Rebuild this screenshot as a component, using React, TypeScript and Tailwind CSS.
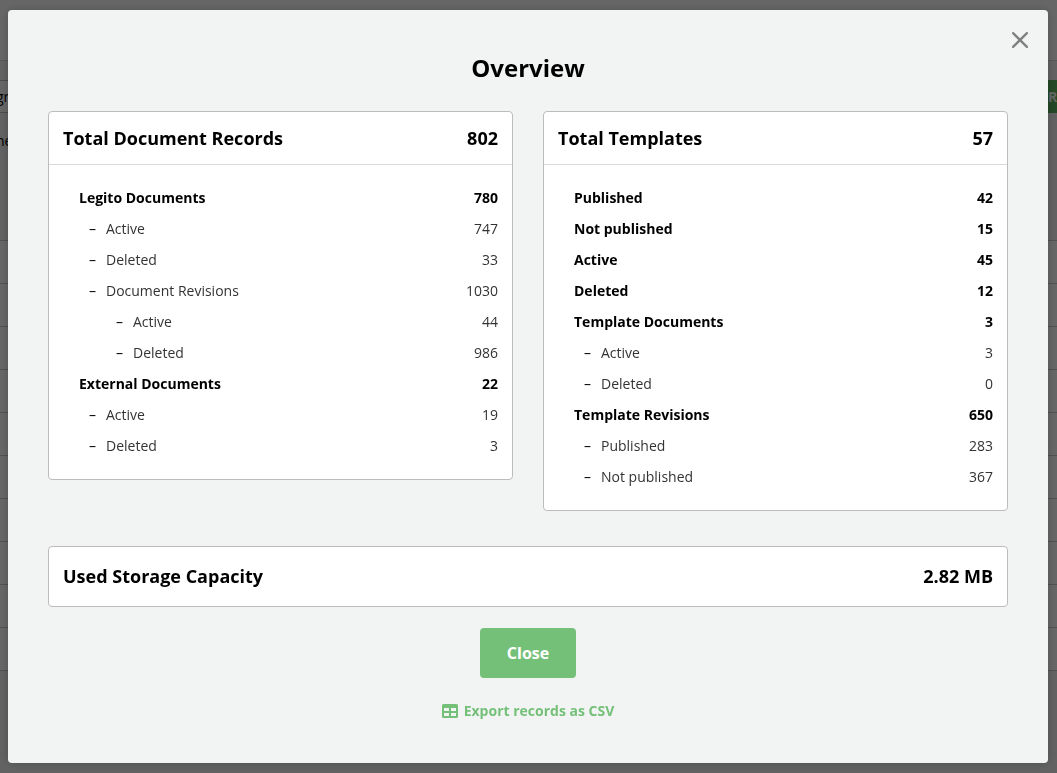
import { X } from "lucide-react";

interface StatRow {
  label: string;
  value: string;
  level: 0 | 1 | 2;
}

interface StatCardProps {
  title: string;
  total: string;
  rows?: StatRow[];
}

const documentRows: StatRow[] = [
  { label: "Legito Documents", value: "780", level: 0 },
  { label: "Active", value: "747", level: 1 },
  { label: "Deleted", value: "33", level: 1 },
  { label: "Document Revisions", value: "1030", level: 1 },
  { label: "Active", value: "44", level: 2 },
  { label: "Deleted", value: "986", level: 2 },
  { label: "External Documents", value: "22", level: 0 },
  { label: "Active", value: "19", level: 1 },
  { label: "Deleted", value: "3", level: 1 },
];

const templateRows: StatRow[] = [
  { label: "Published", value: "42", level: 0 },
  { label: "Not published", value: "15", level: 0 },
  { label: "Active", value: "45", level: 0 },
  { label: "Deleted", value: "12", level: 0 },
  { label: "Template Documents", value: "3", level: 0 },
  { label: "Active", value: "3", level: 1 },
  { label: "Deleted", value: "0", level: 1 },
  { label: "Template Revisions", value: "650", level: 0 },
  { label: "Published", value: "283", level: 1 },
  { label: "Not published", value: "367", level: 1 },
];

const indent = {
  0: "font-bold",
  1: "pl-[10px] font-normal",
  2: "pl-[37px] font-normal",
};

function StatCard({ title, total, rows }: StatCardProps) {
  return (
    <section className="overflow-hidden rounded border border-[#bbbcbb] bg-white">
      <header
        className={`flex items-center justify-between px-[14px] text-lg font-bold text-black ${
          rows ? "h-[53px] border-b border-[#d9d9d9]" : "h-[59px] pb-px"
        }`}
      >
        <h2>{title}</h2>
        <span>{total}</span>
      </header>
      {rows && (
        <div className="pt-[17px] pr-[14px] pb-[18px] pl-[30px]">
          <table className="w-full text-sm">
            <tbody>
              {rows.map((row, i) => (
                <tr
                  key={i}
                  className={`h-[31px] ${row.level === 0 ? "font-bold text-black" : "font-normal text-[#333]"}`}
                >
                  <th scope="row" className={`p-0 text-left ${indent[row.level]}`}>
                    {row.level > 0 && (
                      <span aria-hidden="true" className="inline-block w-[17px] text-black">
                        –
                      </span>
                    )}
                    {row.label}
                  </th>
                  <td className="p-0 text-right">{row.value}</td>
                </tr>
              ))}
            </tbody>
          </table>
        </div>
      )}
    </section>
  );
}

function TableIcon() {
  return (
    <svg width="16" height="14" viewBox="0 0 16 14" aria-hidden="true" fill="currentColor">
      <path
        fillRule="evenodd"
        d="M1.500 0h13A1.500 1.500 0 0 1 16 1.500v11a1.500 1.500 0 0 1-1.500 1.500h-13A1.500 1.500 0 0 1 0 12.500v-11A1.500 1.500 0 0 1 1.500 0ZM2 4v3h5V4ZM9 4v3h5V4ZM2 9v3h5V9ZM9 9v3h5V9Z"
      />
    </svg>
  );
}

// records page that stays visible under the overlay
function RecordsPage() {
  return (
    <div aria-hidden="true" className="min-h-screen bg-[#f2f4f3] text-sm text-black">
      <div className="h-[61px] border-b border-[#d8dad9] bg-white" />
      <div className="h-[179px] pt-[19px]">
        <div className="flex h-[33px] items-center justify-between border-y border-[#bbbcbb] bg-white">
          <span className="-ml-1">gr</span>
          <span className="flex h-[33px] w-[9px] items-center bg-[#5cb562] font-bold text-white">R</span>
        </div>
        <div className="-ml-1 pt-[18px]">ne</div>
      </div>
      <div className="border-t border-[#c8cac9] bg-white">
        {Array.from({ length: 10 }, (_, i) => (
          <div key={i} className="h-[43px] border-b border-[#c8cac9]" />
        ))}
      </div>
    </div>
  );
}

export default function App() {
  return (
    <div className="font-['Open_Sans',sans-serif]">
      <RecordsPage />
      <div className="fixed inset-0 overflow-auto bg-black/60 py-[10px] pr-[9px] pl-2">
        <div
          role="dialog"
          aria-modal="true"
          aria-labelledby="overview-title"
          className="relative mx-auto max-w-[1040px] rounded bg-[#f2f4f3] px-10 pt-10 pb-[42px] shadow-[0_0_10px_rgba(0,0,0,0.2)]"
        >
          <button type="button" aria-label="Close dialog" className="absolute top-[18px] right-4 text-[#808080]">
            <X size={24} strokeWidth={2} className="scale-[1.15]" />
          </button>
          <h1 id="overview-title" className="text-center text-2xl leading-9 font-bold text-black">
            Overview
          </h1>
          <div className="mt-[25px] grid grid-cols-2 items-start gap-[30px]">
            <StatCard title="Total Document Records" total="802" rows={documentRows} />
            <StatCard title="Total Templates" total="57" rows={templateRows} />
          </div>
          <div className="mt-[35px]">
            <StatCard title="Used Storage Capacity" total="2.82 MB" />
          </div>
          <div className="mt-[21px] flex flex-col items-center">
            <button type="button" className="h-[50px] w-24 rounded bg-[#75c079] text-base font-bold text-white">
              Close
            </button>
            <a href="#export" className="mt-[23px] flex items-center gap-[6px] text-sm font-bold text-[#75c079]">
              <TableIcon />
              Export records as CSV
            </a>
          </div>
        </div>
      </div>
    </div>
  );
}
